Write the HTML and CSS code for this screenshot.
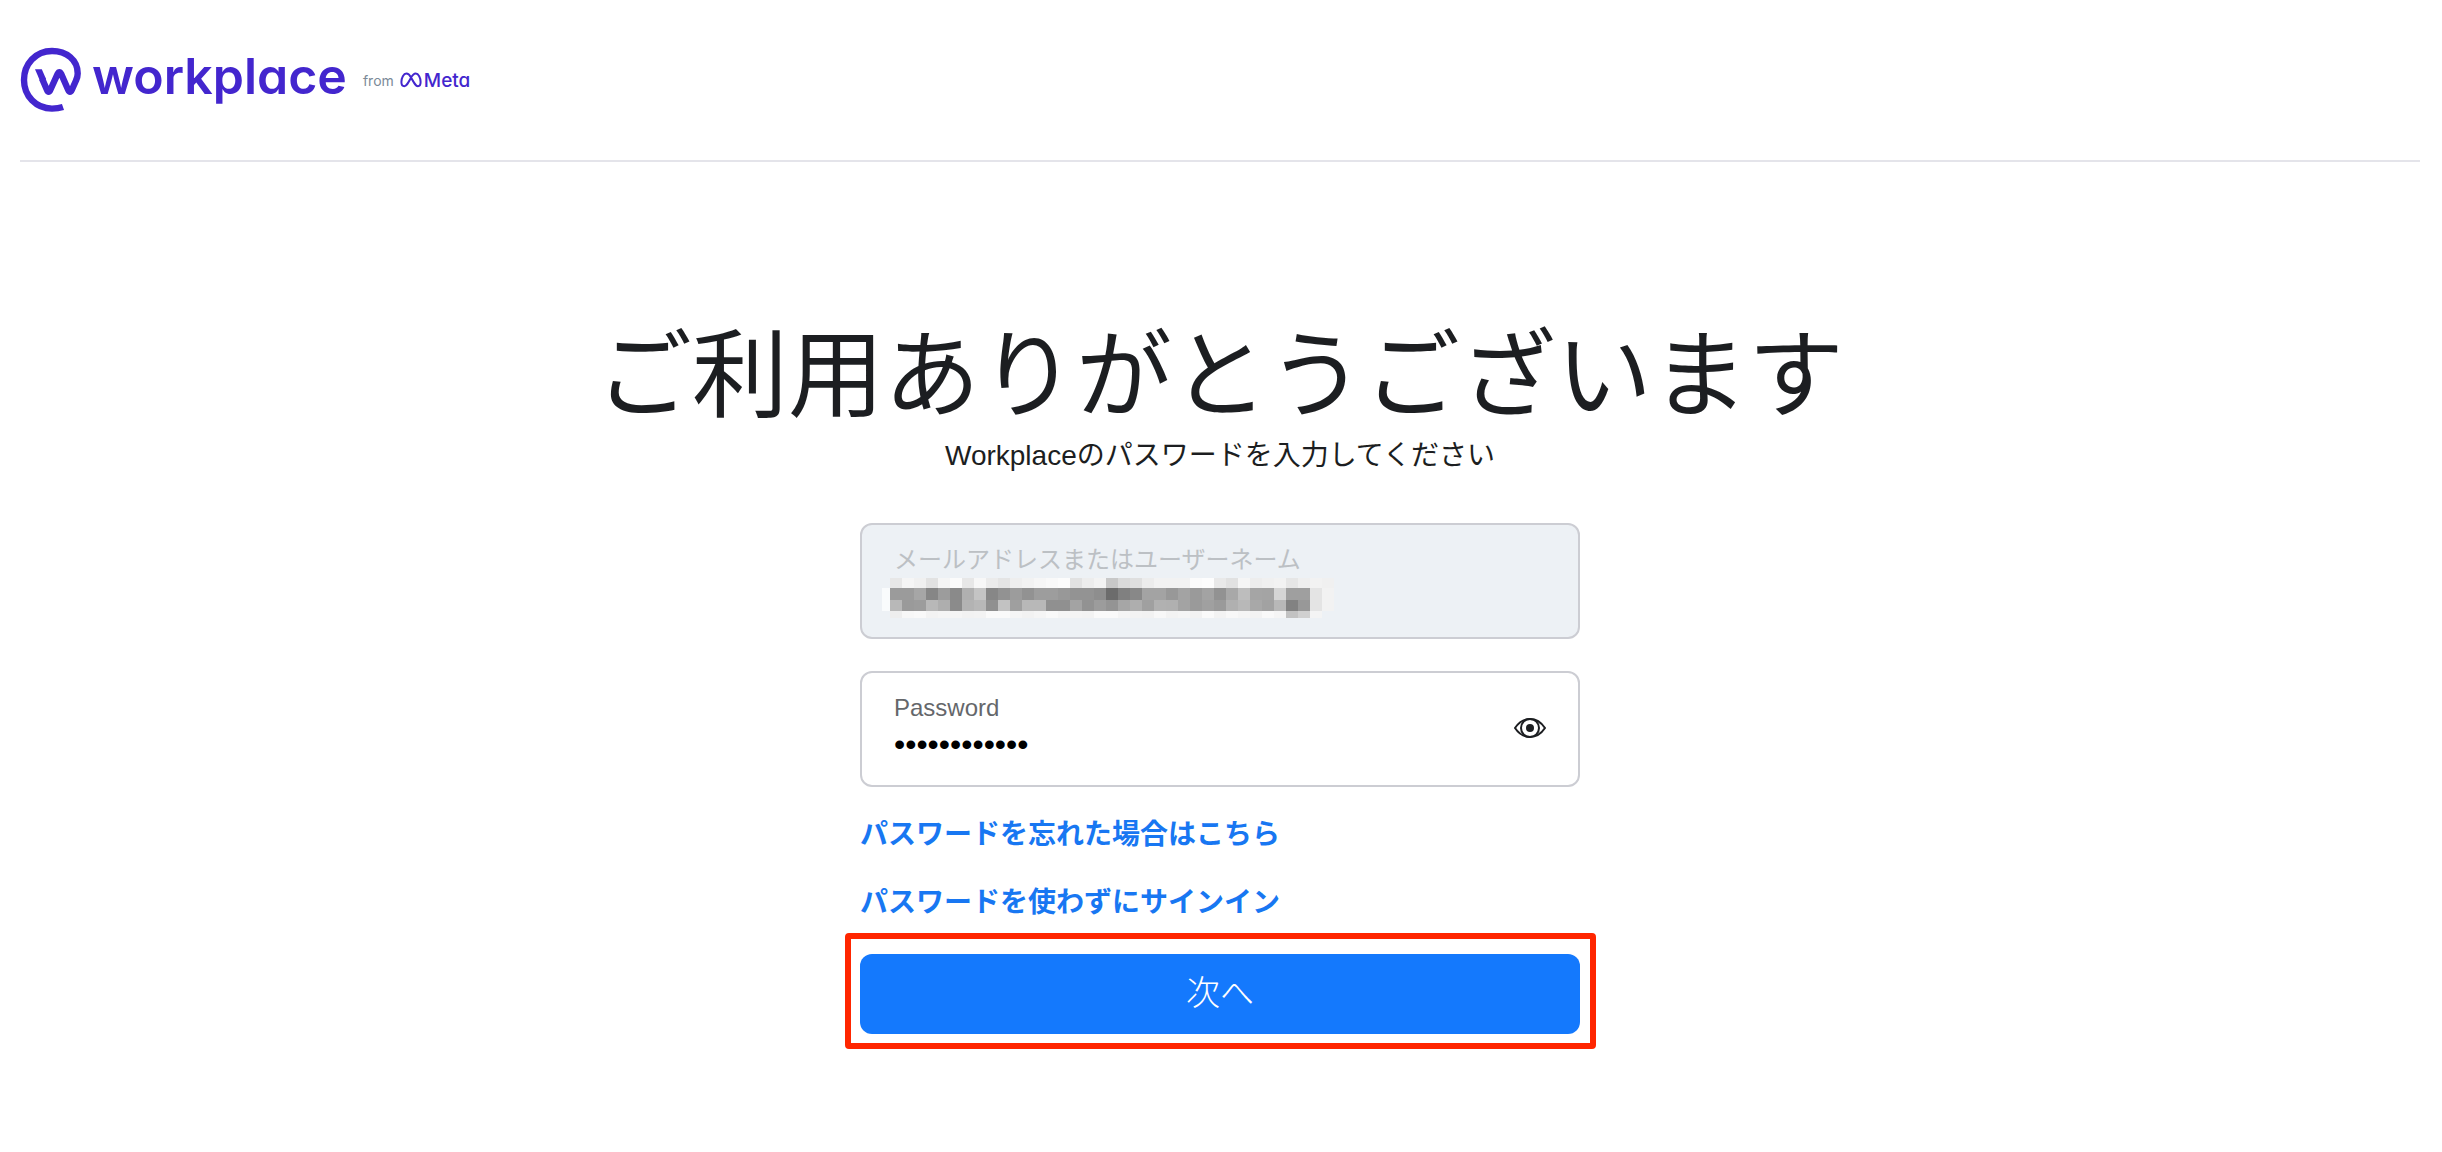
FILE: index.html
```html
<!DOCTYPE html>
<html lang="ja">
<head>
    <meta charset="UTF-8">
    <meta name="viewport" content="width=device-width, initial-scale=1.0">
    <title>Workplace</title>
    <link rel="stylesheet" href="styles.css">
</head>
<body>

<header class="header">
    <a class="logo" href="#" aria-label="Workplace from Meta">
        <svg class="logo-mark" width="64" height="68" viewBox="0 0 64 68" fill="none">
            <path d="M15 23.3h6.8l4.4 10-5.7 2.6z" fill="#4326ce"/>
            <path d="M22 32.5L27 44Q28.6 47.8 30.3 44L37.6 28Q39.4 24.6 41.2 28L48.2 44Q50 47.8 51.8 44L56 34.5Q57.7 31 57.7 27.5C57.7 14 46.5 5 32 5C15.5 5 4 18 4 34C4 50 16 62.6 32 62.6C36 62.6 39.5 62.2 43 61" stroke="#4326ce" stroke-width="6.4"/>
        </svg>
        <span class="logo-name">workplace</span>
        <span class="logo-from">from</span>
        <svg class="meta-mark" width="22" height="16" viewBox="0 0 22 16" fill="none" stroke="#4326ce" stroke-width="2">
            <path d="M11 5.5C9.6 3 8.2 1.6 6.4 1.6C3.6 1.6 1.4 5.8 1.4 10C1.4 12.8 2.5 14.2 4.3 14.2C6.4 14.2 7.5 12.3 11 5.8C12.6 2.9 13.9 1.6 15.7 1.6C18.5 1.6 20.6 5.7 20.6 10C20.6 12.8 19.6 14.2 17.9 14.2C15.8 14.2 14.7 12.2 11 5.5Z"/>
        </svg>
        <span class="logo-meta">Meta</span>
    </a>
</header>

<main class="main">
    <h1>ご利用ありがとうございます</h1>
    <p class="subtitle">Workplaceのパスワードを入力してください</p>

    <form class="login-form">
        <div class="field field-disabled">
            <div class="field-body">
                <label for="email">メールアドレスまたはユーザーネーム</label>
                <input type="text" id="email" disabled>
                <canvas class="mask" id="mask" width="464" height="42"></canvas>
            </div>
        </div>

        <div class="field">
            <div class="field-body">
                <label for="password">Password</label>
                <input type="password" id="password" value="abcdefghijkl">
            </div>
            <button class="toggle" type="button" aria-label="パスワードを表示">
                <svg width="32" height="20" viewBox="0 0 32 20" fill="none" stroke="#1c1e21" stroke-width="2">
                    <path d="M1 10C5 4 10 1 16 1S27 4 31 10C27 16 22 19 16 19S5 16 1 10Z"/>
                    <circle cx="16" cy="10" r="9"/>
                    <circle cx="16" cy="10" r="4" fill="#1c1e21" stroke="none"/>
                </svg>
            </button>
        </div>

        <div class="links">
            <a href="#">パスワードを忘れた場合はこちら</a>
            <a href="#">パスワードを使わずにサインイン</a>
        </div>

        <div class="submit">
            <button class="next" type="button">次へ</button>
        </div>
    </form>
</main>

<script>
    // Grey level of each block in the masked address, two hex digits per block
    const rows = [
        { y: 0, h: 10, cells: "e7f5f0e2 f5fbe7f7 ebe4eef2 f6f9fce2 edf3c8da dfecf2f2 f2fbfde9 e1f5edf0 f2e6eff2 f0" },
        { y: 10, h: 12, cells: "9b9ba686 9c8ab0c4 87929c92 9d9d9893 938e6c80 88a3a398 a39aa392 a8bda5a4 d59f9fe4 f2" },
        { y: 22, h: 11, cells: "b89a9cb8 ae8bb3b8 90c29fb8 b89090a3 929c94a6 aea0b1b0 a39aa09a b0b8a8a2 b88298e4 f2" },
        { y: 33, h: 7, cells: "eef7f9f3 f5f5f2f3 fafaf5f2 f5f9f5f4 f3fafaf5 f3f2f8f3 f5f2faf3 f8f5f3f9 f5c2d0f4" }
    ];

    const ctx = document.getElementById("mask").getContext("2d");
    rows.forEach(function(row) {
        const levels = row.cells.replace(/ /g, "").match(/../g);
        levels.forEach(function(level, i) {
            ctx.fillStyle = "#" + level + level + level;
            ctx.fillRect(8 + i * 12, row.y, 12, row.h);
        });
    });
    ctx.fillStyle = "#f9fbfc";
    ctx.fillRect(0, 10, 8, 23);
</script>

</body>
</html>
```
FILE: styles.css
```css
/* Global styles */
* {
    box-sizing: border-box;
}
body {
    margin: 0;
    background-color: #fff;
    color: #1c1e21;
    font-family: "Liberation Sans", "Noto Sans CJK JP", sans-serif;
}

/* Header */
.header {
    margin: 0 22px 0 20px;
    padding: 46px 0;
    border-bottom: 2px solid #e4e4ea;
}
.logo {
    display: flex;
    align-items: center;
    width: max-content;
    color: #4326ce;
    font-family: Inter, sans-serif;
    font-feature-settings: "cv11";
    text-decoration: none;
}
.logo-name {
    margin-left: 8px;
    padding-bottom: 8px;
    font-size: 50px;
    font-weight: 600;
    line-height: 60px;
}
.logo-from {
    margin: 0 6px 0 16px;
    color: #7b8a98;
    font-size: 14px;
}
.logo-meta {
    margin-left: 2px;
    font-size: 19px;
    font-weight: 500;
}

/* Sign in */
.main {
    padding: 154px 22px 40px 20px;
    text-align: center;
}
h1 {
    margin: 0;
    font-size: 96px;
    font-weight: 400;
    line-height: 120px;
}
.subtitle {
    margin: 0;
    font-size: 28px;
    line-height: 40px;
}
.login-form {
    max-width: 720px;
    margin: 47px auto 0;
    text-align: left;
}
.field {
    display: flex;
    align-items: center;
    margin-bottom: 32px;
    padding: 19px 32px 21px;
    border: 2px solid #cccdd3;
    border-radius: 12px;
}
.field-disabled {
    background-color: #edf1f5;
}
.field-body {
    position: relative;
    flex: 1;
}
.field label {
    display: block;
    color: #65676b;
    font-size: 24px;
    line-height: 32px;
}
.field-disabled label {
    color: #bcc0c4;
}
.field input {
    display: block;
    width: 100%;
    height: 40px;
    padding: 0;
    border: 0;
    outline: 0;
    background: none;
    color: #000;
    font-family: inherit;
    font-size: 32px;
}
.mask {
    position: absolute;
    top: 34px;
    left: -12px;
}
.toggle {
    display: flex;
    padding: 0;
    border: 0;
    background: none;
    cursor: pointer;
}
.links {
    display: flex;
    flex-direction: column;
    align-items: flex-start;
    gap: 28px;
    margin-top: -4px;
    line-height: 40px;
}
.links a {
    color: #1877f2;
    font-size: 28px;
    font-weight: 700;
    text-decoration: none;
}
.submit {
    position: relative;
    margin-top: 31px;
}
/* Red frame around the button */
.submit::after {
    content: "";
    position: absolute;
    inset: -21px -16px -15px -15px;
    border: 6px solid #ff2600;
    border-radius: 4px;
    pointer-events: none;
}
.next {
    display: block;
    width: 100%;
    height: 80px;
    padding: 0 0 8px;
    border: 0;
    border-radius: 12px;
    background-color: #1479fd;
    color: #fff;
    font-family: "Noto Sans CJK JP", sans-serif;
    font-size: 34px;
    font-weight: 300;
    cursor: pointer;
}
```
